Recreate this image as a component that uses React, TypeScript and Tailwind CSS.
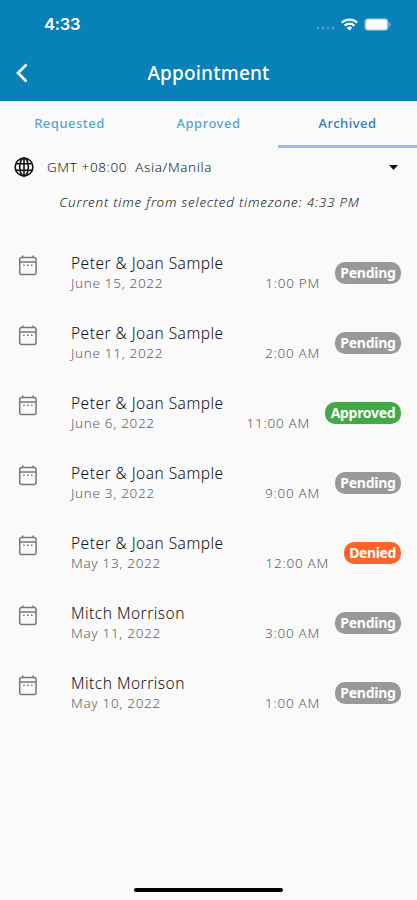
type Status = 'Pending' | 'Approved' | 'Denied'

interface Appointment {
  name: string
  date: string
  time: string
  status: Status
}

const appointments: Appointment[] = [
  { name: 'Peter & Joan Sample', date: 'June 15, 2022', time: '1:00 PM', status: 'Pending' },
  { name: 'Peter & Joan Sample', date: 'June 11, 2022', time: '2:00 AM', status: 'Pending' },
  { name: 'Peter & Joan Sample', date: 'June 6, 2022', time: '11:00 AM', status: 'Approved' },
  { name: 'Peter & Joan Sample', date: 'June 3, 2022', time: '9:00 AM', status: 'Pending' },
  { name: 'Peter & Joan Sample', date: 'May 13, 2022', time: '12:00 AM', status: 'Denied' },
  { name: 'Mitch Morrison', date: 'May 11, 2022', time: '3:00 AM', status: 'Pending' },
  { name: 'Mitch Morrison', date: 'May 10, 2022', time: '1:00 AM', status: 'Pending' },
]

const badgeStyles: Record<Status, string> = {
  Pending: 'w-[66px] bg-[#999999] tracking-[-0.25px]',
  Approved: 'w-[76px] bg-[#43a847] tracking-[-0.3px]',
  Denied: 'w-[57px] bg-[#fc6428] tracking-[-0.4px]',
}

function StatusBar() {
  return (
    <div className="flex h-12 items-center justify-between pl-[44px] pr-[26px]">
      <span className="font-['Inter',sans-serif] text-[16.5px] font-semibold leading-none tracking-[-0.25px]">4:33</span>
      <div className="flex items-center">
        <svg width="19" height="4" viewBox="0 0 19 4" className="mr-[6px] mt-2" fill="#fff" opacity="0.3">
          <circle cx="2" cy="2" r="1.4" />
          <circle cx="7" cy="2" r="1.4" />
          <circle cx="12" cy="2" r="1.4" />
          <circle cx="17" cy="2" r="1.4" />
        </svg>
        <svg width="17" height="13" viewBox="0 0 17 12" className="mr-[6px]" fill="#fff">
          <path d="M8.5 0C5.3 0 2.4 1.2.3 3.2c-.2.2-.2.4 0 .6l1 1c.2.2.4.2.6 0C3.6 3.2 5.9 2.3 8.5 2.3s4.9.9 6.6 2.5c.2.2.4.2.6 0l1-1c.2-.2.2-.4 0-.6C14.6 1.2 11.7 0 8.5 0z" />
          <path d="M8.5 4c-2 0-3.9.8-5.3 2.1-.2.2-.2.4 0 .6l1.1 1.1c.2.2.4.2.6 0 1-.9 2.2-1.4 3.600-1.400s2.600.5 3.600 1.400c.2.200.4.200.6 0l1.100-1.100c.2-.2.2-.4 0-.6C12.400 4.800 10.500 4 8.500 4z" />
          <path d="M8.500 8c-1 0-1.800.4-2.500.9-.2.200-.2.400 0 .6l2.200 2.300c.2.200.4.200.6 0L11 9.500c.2-.2.2-.4 0-.6C10.300 8.400 9.500 8 8.500 8z" />
        </svg>
        <svg width="27" height="13" viewBox="0 0 27 13" fill="none">
          <rect x="0.5" y="0.5" width="24" height="12" rx="3.5" stroke="#fff" strokeOpacity="0.35" />
          <rect x="1.500" y="1.300" width="22" height="10.400" rx="2.200" fill="#fff" />
          <path d="M25.400 4.500v4c.9-.3 1.300-1.100 1.300-2s-.4-1.700-1.300-2z" fill="#fff" fillOpacity="0.5" />
        </svg>
      </div>
    </div>
  )
}

function CalendarIcon() {
  return (
    <svg width="20" height="21" viewBox="0 0 20 21" fill="none" stroke="#777" strokeWidth="1.500">
      <rect x="1.700" y="2.600" width="16.400" height="16.800" rx="2" />
      <path d="M2 7h16M4.700.4v2.400M15.100.4v2.400" />
      <path d="M5.200 10.300h1.500M9.100 10.300h1.500M13 10.300h1.500" />
    </svg>
  )
}

function GlobeIcon() {
  return (
    <svg width="20" height="20" viewBox="0 0 20 20" fill="none" stroke="#111" strokeWidth="1.600">
      <circle cx="10" cy="10" r="8.900" />
      <ellipse cx="10" cy="10" rx="4.300" ry="8.900" />
      <path d="M10 1v18M1.800 6.700h16.400M1.800 13.300h16.400" />
    </svg>
  )
}

function AppointmentRow({ name, date, time, status }: Appointment) {
  return (
    <li className="flex h-[70px] items-start pl-[18px] pr-4">
      <div className="w-[53px] pt-[5px]">
        <CalendarIcon />
      </div>
      <div className="flex-1 whitespace-nowrap pt-[3px]">
        <div className="text-[15.5px] font-light leading-5 tracking-[0.48px] text-[#111]">{name}</div>
        <div className="text-[13.5px] font-light leading-5 tracking-[0.68px] text-[#606060]">{date}</div>
      </div>
      <span className="mr-[15px] whitespace-nowrap pt-[23px] text-[13.5px] font-light leading-5 tracking-[0.72px] text-[#606060]">
        {time}
      </span>
      <span
        className={`mt-3 flex h-[22px] items-center justify-center rounded-[10px] pb-px text-[14px] font-bold leading-none text-white ${badgeStyles[status]}`}
      >
        {status}
      </span>
    </li>
  )
}

export default function App() {
  return (
    <div className="flex h-[900px] w-[417px] flex-col overflow-hidden bg-[#fafafa] font-['Noto_Sans',sans-serif]">
      <header className="h-[101px] bg-[#0880b8] text-white">
        <StatusBar />
        <div className="grid h-[50px] grid-cols-[44px_1fr_44px] items-center">
          <button className="pl-4" aria-label="Back">
            <svg width="12" height="20" viewBox="0 0 12 20" fill="none" stroke="#fff" strokeWidth="2.600">
              <path d="M10.500 1.500L2 10l8.500 8.500" />
            </svg>
          </button>
          <h1 className="text-center text-[19px] font-medium leading-none tracking-[0.2px]">Appointment</h1>
        </div>
      </header>

      <nav className="grid h-[47px] grid-cols-3 text-[13px] font-medium tracking-[0.5px] text-[#55a7d2]">
        <button className="border-b-[3px] border-transparent pt-px">Requested</button>
        <button className="border-b-[3px] border-transparent pt-px">Approved</button>
        <button className="border-b-[3px] border-[#9bbcec] pt-px text-[#2f7dba]">Archived</button>
      </nav>

      <div className="flex h-[38px] items-center pl-[14px] pr-[19px]">
        <GlobeIcon />
        <span className="ml-[13px] flex-1 whitespace-pre text-[13.5px] font-light tracking-[0.6px] text-[#222]">
          {'GMT +08:00  Asia/Manila'}
        </span>
        <svg width="9" height="5" viewBox="0 0 9 5" fill="#111">
          <path d="M0 0h9L4.500 5z" />
        </svg>
      </div>
      <p className="mt-[6px] h-5 whitespace-nowrap pl-0.5 text-center text-[13.500px] font-light italic leading-5 tracking-[0.75px] text-[#222]">
        Current time from selected timezone: 4:33 PM
      </p>

      <ul className="mt-[38px]">
        {appointments.map((item) => (
          <AppointmentRow key={item.date} {...item} />
        ))}
      </ul>

      <div className="mx-auto mb-2 mt-auto h-1 w-[149px] rounded-full bg-black" />
    </div>
  )
}
